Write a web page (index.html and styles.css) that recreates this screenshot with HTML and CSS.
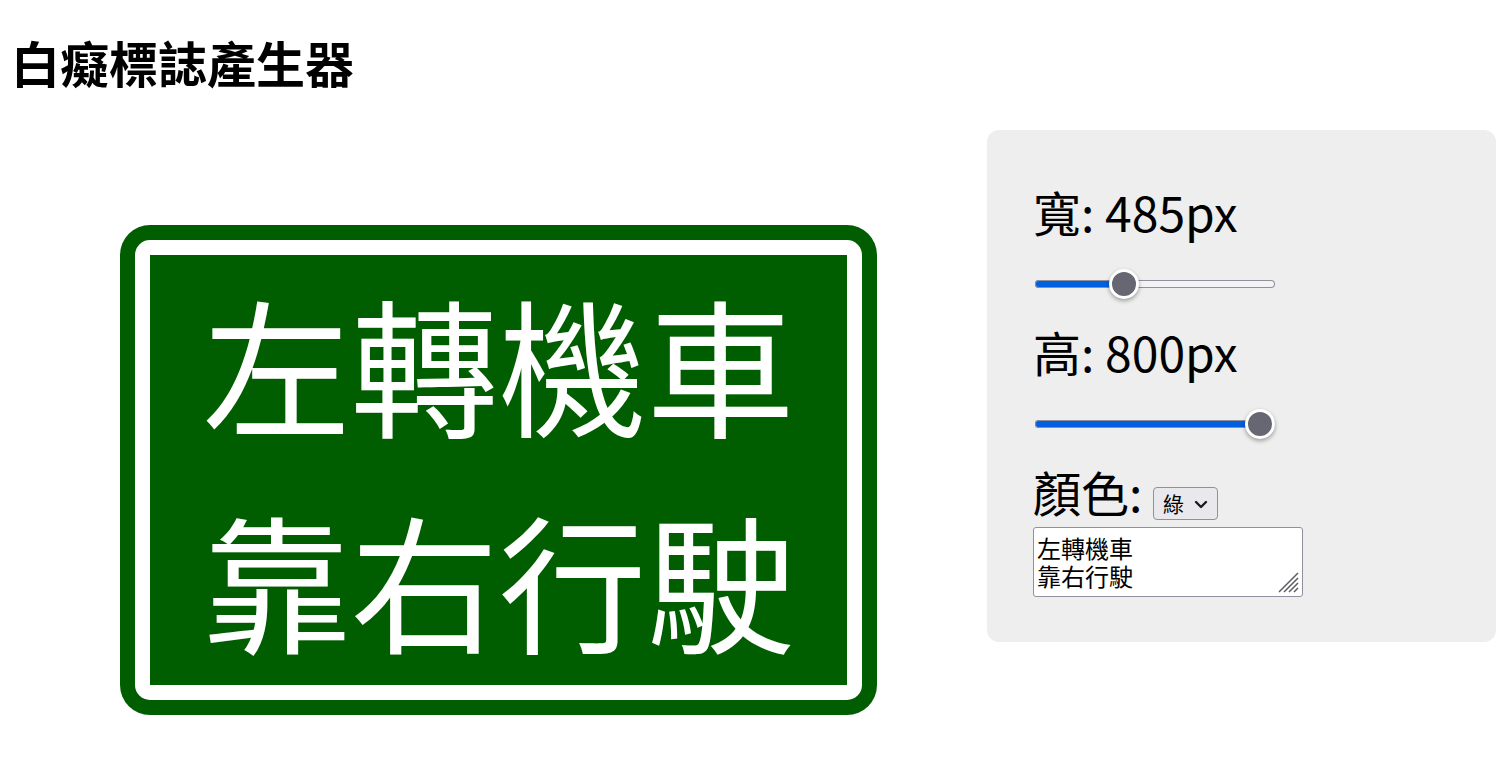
FILE: index.html
```html
<!DOCTYPE html>
<html lang="zh-Hant">
<head>
<meta charset="utf-8">
<title>白癡標誌產生器</title>
<link rel="stylesheet" href="styles.css">
</head>
<body>
<h1 class="title">白癡標誌產生器</h1>
<main class="layout">
  <section class="preview">
    <div class="sign">
      <div class="sign-frame">
        <div class="sign-face">
          <div class="sign-line">左轉機車</div>
          <div class="sign-line">靠右行駛</div>
        </div>
      </div>
    </div>
  </section>
  <aside class="panel">
    <div class="field-label">寬: 485px</div>
    <input class="slider" type="range" min="100" max="1200" value="485" style="--p: 37%">
    <div class="field-label">高: 800px</div>
    <input class="slider" type="range" min="100" max="800" value="800" style="--p: 100%">
    <div class="field-label">顏色: <span class="select-wrap"><select class="color-select"><option>綠</option><option>藍</option><option>紅</option></select><svg class="chevron" width="14" height="9" viewBox="0 0 14 9"><path d="M2 2 L7 7 L12 2" fill="none" stroke="#1b1b1f" stroke-width="2.4" stroke-linecap="round" stroke-linejoin="round"/></svg></span></div>
    <div class="textarea-wrap">
      <textarea class="text-input">左轉機車
靠右行駛</textarea>
      <svg class="grip" width="21" height="21" viewBox="0 0 21 21"><path d="M20 1 L1 20 M20 6 L6 20 M20 11 L11 20 M20 16 L16 20" stroke="#5c5c62" stroke-width="1.5" fill="none"/></svg>
    </div>
  </aside>
</main>
</body>
</html>
```
FILE: styles.css
```css
html, body {
  margin: 0;
  padding: 0;
  background: #fff;
}
body {
  font-family: "Noto Sans CJK TC", "Noto Sans", sans-serif;
  font-size: 24px;
  color: #000;
}
.title {
  margin: 0;
  padding: 27px 8px 0 11px;
  font-size: 49px;
  font-weight: 700;
  line-height: 70px;
}
.layout {
  display: flex;
  align-items: flex-start;
  margin-top: 33px;
  padding-left: 10px;
}
.preview {
  flex: 1;
  display: flex;
  justify-content: center;
  padding-top: 95px;
}
.sign {
  width: 757px;
  height: 490px;
  box-sizing: border-box;
  background: #005e00;
  border-radius: 30px;
  padding: 15px;
}
.sign-frame {
  height: 100%;
  box-sizing: border-box;
  background: #fff;
  border-radius: 15px;
  padding: 15px;
}
.sign-face {
  height: 100%;
  background: #005e00;
  display: flex;
  flex-direction: column;
  justify-content: center;
  align-items: center;
}
.sign-line {
  color: #fff;
  font-size: 148px;
  line-height: 216px;
  white-space: nowrap;
}
.panel {
  width: 509px;
  box-sizing: border-box;
  background: #eeeeee;
  border-radius: 12px;
  padding: 46px 46px 45px;
}
.field-label {
  font-size: 48px;
  line-height: 70px;
  white-space: nowrap;
}
.slider {
  -webkit-appearance: none;
  appearance: none;
  display: block;
  width: 240px;
  height: 30px;
  margin: 23px 0 17px 2px;
  padding: 0;
  background: transparent;
}
.slider::-webkit-slider-runnable-track {
  height: 8px;
  border-radius: 4px;
  background: linear-gradient(to right, #0060df 0, #0060df var(--p), #f3f3f6 var(--p), #f3f3f6 100%);
  box-shadow: inset 0 0 0 1px #8f8f9d;
}
.slider::-webkit-slider-thumb {
  -webkit-appearance: none;
  appearance: none;
  width: 30px;
  height: 30px;
  box-sizing: border-box;
  border-radius: 50%;
  background: #676774;
  border: 3px solid #fff;
  box-shadow: 0 2px 4px rgba(0, 0, 0, 0.35);
  margin-top: -11px;
}
.select-wrap {
  position: relative;
  display: inline-flex;
  vertical-align: baseline;
}
.color-select {
  -webkit-appearance: none;
  appearance: none;
  width: 65px;
  height: 33px;
  box-sizing: border-box;
  padding: 0 0 0 9px;
  font-family: "Noto Sans CJK TC", sans-serif;
  font-size: 21px;
  color: #000;
  background: #e9e9ed;
  border: 1px solid #8f8f9d;
  border-radius: 4px;
}
.chevron {
  position: absolute;
  right: 10px;
  top: 13px;
  pointer-events: none;
}
.textarea-wrap {
  position: relative;
  width: 270px;
  margin-top: 1px;
}
.text-input {
  display: block;
  width: 270px;
  height: 70px;
  box-sizing: border-box;
  margin: 0;
  padding: 6px 3px 0;
  font-family: "Noto Sans CJK TC", sans-serif;
  font-size: 24px;
  line-height: 28px;
  color: #000;
  background: #fff;
  border: 1px solid #8f8f9d;
  border-radius: 3px;
  resize: none;
  overflow: hidden;
}
.grip {
  position: absolute;
  right: 4px;
  bottom: 4px;
  pointer-events: none;
}
```
